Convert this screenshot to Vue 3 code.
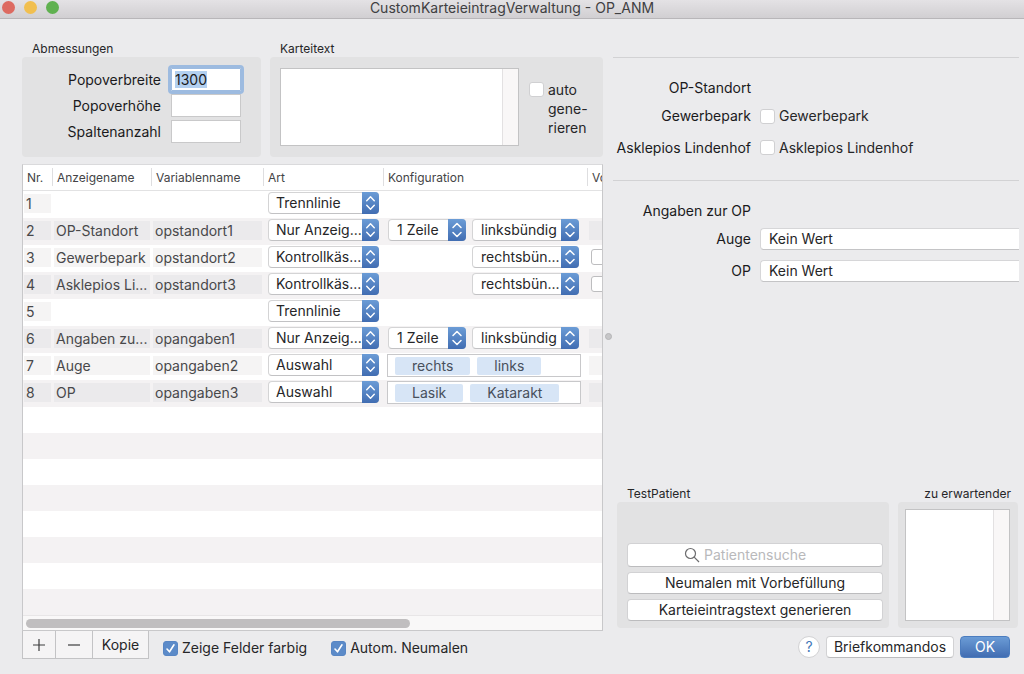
<script setup>
import { onMounted, ref } from 'vue'

const popoverWidth = ref('1300')
const popoverHeight = ref('')
const columnCount = ref('')
const widthInput = ref(null)

const rows = [
  { nr: 1, art: 'Trennlinie' },
  { nr: 2, name: 'OP-Standort', variable: 'opstandort1', art: 'Nur Anzeig...', lines: '1 Zeile', align: 'linksbündig', last: 'field' },
  { nr: 3, name: 'Gewerbepark', variable: 'opstandort2', art: 'Kontrollkäs...', align: 'rechtsbün...', last: 'check' },
  { nr: 4, name: 'Asklepios Li...', variable: 'opstandort3', art: 'Kontrollkäs...', align: 'rechtsbün...', last: 'check' },
  { nr: 5, art: 'Trennlinie' },
  { nr: 6, name: 'Angaben zu...', variable: 'opangaben1', art: 'Nur Anzeig...', lines: '1 Zeile', align: 'linksbündig', last: 'field' },
  { nr: 7, name: 'Auge', variable: 'opangaben2', art: 'Auswahl', tokens: ['rechts', 'links'], last: 'field' },
  { nr: 8, name: 'OP', variable: 'opangaben3', art: 'Auswahl', tokens: ['Lasik', 'Katarakt'], last: 'field' }
]

onMounted(() => {
  widthInput.value.focus()
  widthInput.value.select()
})
</script>

<template>
  <div class="window">
    <header class="titlebar">
      <div class="lights">
        <button class="light red" aria-label="Schließen"></button>
        <button class="light yellow" aria-label="Minimieren"></button>
        <button class="light green" aria-label="Vollbild"></button>
      </div>
      <h1>CustomKarteieintragVerwaltung - OP_ANM</h1>
    </header>

    <main class="content">
      <section class="left">
        <div class="groups">
          <section class="group dims">
            <h2>Abmessungen</h2>
            <div class="box dims-box">
              <label for="pw">Popoverbreite</label>
              <input id="pw" ref="widthInput" v-model="popoverWidth" type="text" class="num">
              <label for="ph">Popoverhöhe</label>
              <input id="ph" v-model="popoverHeight" type="text" class="num">
              <label for="cc">Spaltenanzahl</label>
              <input id="cc" v-model="columnCount" type="text" class="num">
            </div>
          </section>
          <section class="group card">
            <h2>Karteitext</h2>
            <div class="box card-box">
              <div class="area">
                <textarea aria-label="Karteitext"></textarea>
                <span class="track"></span>
              </div>
              <label class="auto">
                <input type="checkbox" class="check">
                <span>auto<br>gene-<br>rieren</span>
              </label>
            </div>
          </section>
        </div>

        <div class="table-frame">
          <table>
            <colgroup>
              <col class="c-nr"><col class="c-name"><col class="c-var"><col class="c-art"><col class="c-conf"><col>
            </colgroup>
            <thead>
              <tr>
                <th>Nr.</th><th>Anzeigename</th><th>Variablenname</th><th>Art</th><th>Konfiguration</th><th>Vo</th>
              </tr>
            </thead>
            <tbody>
              <tr v-for="row in rows" :key="row.nr">
                <td><span class="cell">{{ row.nr }}</span></td>
                <td><span v-if="row.name" class="cell">{{ row.name }}</span></td>
                <td><span v-if="row.variable" class="cell">{{ row.variable }}</span></td>
                <td class="controls">
                  <span class="popup art">
                    <select :aria-label="'Art ' + row.nr"><option>{{ row.art }}</option></select>
                    <svg viewBox="0 0 18 22" aria-hidden="true"><path d="M5 8.5 9 4.5 13 8.5M5 13.5 9 17.5 13 13.5" /></svg>
                  </span>
                </td>
                <td class="controls">
                  <div v-if="row.tokens" class="tokens">
                    <span v-for="token in row.tokens" :key="token" class="token">{{ token }}</span>
                  </div>
                  <div v-else-if="row.align" class="config">
                    <span v-if="row.lines" class="popup lines">
                      <select :aria-label="'Zeilen ' + row.nr"><option>{{ row.lines }}</option></select>
                      <svg viewBox="0 0 18 22" aria-hidden="true"><path d="M5 8.5 9 4.5 13 8.5M5 13.5 9 17.5 13 13.5" /></svg>
                    </span>
                    <span class="popup align">
                      <select :aria-label="'Ausrichtung ' + row.nr"><option>{{ row.align }}</option></select>
                      <svg viewBox="0 0 18 22" aria-hidden="true"><path d="M5 8.5 9 4.5 13 8.5M5 13.5 9 17.5 13 13.5" /></svg>
                    </span>
                  </div>
                </td>
                <td class="clip">
                  <span v-if="row.last === 'field'" class="cell"></span>
                  <input v-if="row.last === 'check'" type="checkbox" class="check outlined" :aria-label="'Vorbelegung ' + row.nr">
                </td>
              </tr>
              <tr v-for="n in 8" :key="'empty' + n" class="empty"><td colspan="6"></td></tr>
            </tbody>
          </table>
          <div class="hscroll"><div class="thumb"></div></div>
        </div>

        <div class="below">
          <div class="segments">
            <button aria-label="Hinzufügen"><svg width="14" height="14" viewBox="0 0 14 14"><path d="M1 7H13M7 1V13" /></svg></button>
            <button aria-label="Entfernen"><svg width="14" height="14" viewBox="0 0 14 14"><path d="M1 7H13" /></svg></button>
            <button>Kopie</button>
          </div>
          <label class="option"><input type="checkbox" class="check" checked>Zeige Felder farbig</label>
          <label class="option"><input type="checkbox" class="check" checked>Autom. Neumalen</label>
        </div>
      </section>

      <div class="splitter"><span></span></div>

      <section class="right">
        <div class="preview first">
          <span class="name">OP-Standort</span><span></span>
          <span class="name">Gewerbepark</span>
          <label class="value"><input type="checkbox" class="check">Gewerbepark</label>
          <span class="name">Asklepios Lindenhof</span>
          <label class="value"><input type="checkbox" class="check">Asklepios Lindenhof</label>
        </div>
        <div class="preview second">
          <span class="name">Angaben zur OP</span><span></span>
          <label class="name" for="auge">Auge</label>
          <select id="auge" class="wide"><option>Kein Wert</option></select>
          <label class="name" for="op">OP</label>
          <select id="op" class="wide"><option>Kein Wert</option></select>
        </div>

        <div class="test">
          <section class="group patient">
            <h2>TestPatient</h2>
            <div class="box patient-box">
              <label class="search">
                <svg width="16" height="16" viewBox="0 0 16 16" aria-hidden="true"><circle cx="6.5" cy="6.5" r="5" /><path d="M10.2 10.2 15 15" /></svg>
                <input type="text" placeholder="Patientensuche" aria-label="Patientensuche">
              </label>
              <button class="push">Neumalen mit Vorbefüllung</button>
              <button class="push">Karteieintragstext generieren</button>
            </div>
          </section>
          <section class="group expected">
            <h2>zu erwartender</h2>
            <div class="box expected-box">
              <div class="area">
                <textarea aria-label="zu erwartender"></textarea>
                <span class="track"></span>
              </div>
            </div>
          </section>
        </div>

        <footer class="actions">
          <button class="help">?</button>
          <button class="push brief">Briefkommandos</button>
          <button class="push ok">OK</button>
        </footer>
      </section>
    </main>
  </div>
</template>

<style>
body {
  background: #ebebed;
}
</style>

<style scoped>
* {
  box-sizing: border-box;
}

.window {
  display: flex;
  flex-direction: column;
  min-height: 100vh;
  overflow: hidden;
  background: #ebebed;
  color: #262628;
  font: 14px/18px Inter, "Liberation Sans", sans-serif;
}

button, input, select, textarea {
  margin: 0;
  padding: 0;
  border: 0;
  color: inherit;
  font: inherit;
}

h1, h2 {
  margin: 0;
  font-weight: 400;
}

.titlebar {
  display: grid;
  grid-template-columns: 1fr auto 1fr;
  height: 19px;
  background: linear-gradient(#e4e2e5, #d1cfd2);
  border-bottom: 1px solid #b8b6b9;
}

.titlebar h1 {
  font-size: 14px;
  line-height: 16px;
  color: #404042;
}

.lights {
  display: flex;
  gap: 9px;
  padding: 1px 2px;
}

.light {
  width: 13px;
  height: 13px;
  border-radius: 50%;
}

.red { background: #dd6a61; }
.yellow { background: #f1bf50; }
.green { background: #60b150; }

.content {
  display: flex;
  flex: 1;
  padding: 0 5px 0 22px;
}

.left {
  flex: 581 1 0;
  min-width: 0;
  padding-top: 21px;
}

.right {
  display: flex;
  flex: 406 1 0;
  flex-direction: column;
  min-width: 0;
  padding-top: 38px;
}

.splitter {
  display: flex;
  align-items: center;
  justify-content: center;
  width: 10px;
  padding-bottom: 20px;
}

.splitter span {
  width: 7px;
  height: 7px;
  border: 1px solid #b4b4b6;
  border-radius: 50%;
  background: #c6c6c8;
}

.groups {
  display: flex;
  gap: 9px;
}

.group {
  min-width: 0;
}

.group h2 {
  padding: 0 10px;
  font-size: 12px;
  line-height: 17px;
}

.box {
  border-radius: 4px;
  background: #e2e2e3;
}

.dims { flex: 239 1 0; }
.card { flex: 333 1 0; }

.dims-box {
  display: grid;
  grid-template-columns: 139px 70px;
  grid-auto-rows: 23px;
  gap: 3px 10px;
  height: 100px;
  padding-top: 11px;
  align-items: center;
  color: #1a1a1c;
}

.dims-box label {
  text-align: right;
}

.num {
  width: 100%;
  height: 23px;
  padding: 0 3px;
  border: 1px solid #c9c9ca;
  background: #fff;
}

.num:focus {
  z-index: 1;
  outline: 3px solid #9dbbe0;
  outline-offset: 0;
  border-color: #9dbbe0;
  border-radius: 1px;
}

.num::selection {
  background: #b3d0f0;
  color: #1a1a1c;
}

.card-box {
  display: flex;
  gap: 10px;
  height: 100px;
  padding: 11px 10px;
}

.area {
  display: flex;
  flex: 1;
  min-width: 0;
  border: 1px solid #c3c3c4;
  background: #fff;
}

.area textarea {
  flex: 1;
  min-width: 0;
  resize: none;
  outline: 0;
}

.track {
  flex: none;
  width: 16px;
  border-left: 1px solid #e3e1e2;
  background: #f9f7f7;
}

.auto {
  display: flex;
  gap: 4px;
  width: 64px;
  padding-top: 14px;
  line-height: 19px;
}

.auto span {
  margin-top: -2px;
}

.check {
  flex: none;
  display: block;
  width: 15px;
  height: 15px;
  appearance: none;
  border: 1px solid #d0d0d2;
  border-radius: 3px;
  background: #fff;
}

.check:checked {
  border-color: #5886c4;
  background: #5c8bc9 url("data:image/svg+xml,%3Csvg xmlns='http://www.w3.org/2000/svg' viewBox='0 0 13 13'%3E%3Cpath d='M3 7 5.5 9.8 10 2.8' fill='none' stroke='white' stroke-width='1.6' stroke-linecap='round' stroke-linejoin='round'/%3E%3C/svg%3E") center / 13px 13px no-repeat;
}

.outlined {
  height: 16px;
  margin: 4px 0 0 2px;
  border-color: #bdbdbf;
}

.table-frame {
  margin-top: 7px;
  border: 1px solid #c8c8ca;
  border-top-color: #dadadc;
  overflow: hidden;
  background: #fff;
}

table {
  width: 100%;
  table-layout: fixed;
  border-collapse: separate;
  border-spacing: 0;
}

.c-nr { width: 30px; }
.c-name { width: 99px; }
.c-var { width: 112px; }
.c-art { width: 120px; }
.c-conf { width: 204px; }

th {
  height: 26px;
  padding: 0 0 0 4px;
  border-bottom: 1px solid #e2e2e3;
  background: linear-gradient(#dedee0, #dedee0) right 3px / 1px 18px no-repeat;
  text-align: left;
  font-size: 12px;
  font-weight: 400;
  line-height: 18px;
  white-space: nowrap;
  overflow: hidden;
  color: #444446;
}

th:last-child {
  background: none;
}

td {
  height: 27px;
  padding: 0 2px 0 1px;
  vertical-align: top;
  white-space: nowrap;
}

tr:nth-child(even) td {
  background: #f4f2f3;
}

tr.empty td {
  height: 26px;
}

.cell {
  display: block;
  height: 19px;
  margin-top: 3px;
  padding-left: 2px;
  overflow: hidden;
  background: #f5f4f4;
  line-height: 20px;
  color: #48484a;
}

tr:nth-child(even) .cell {
  background: #ebeaec;
}

.clip {
  padding-right: 0;
  overflow: hidden;
}

.controls {
  padding: 1px 0 0 4px;
}

.popup {
  position: relative;
  display: block;
  height: 22px;
}

.popup select {
  width: 100%;
  height: 22px;
  padding: 0 17px 0 8px;
  appearance: none;
  border: 1px solid #d4d4d5;
  border-bottom-color: #c2c2c4;
  border-radius: 4px;
  background: #fff;
  line-height: 20px;
}

.popup svg {
  position: absolute;
  top: 0;
  right: 0;
  width: 18px;
  height: 22px;
  border-radius: 0 4px 4px 0;
  background: linear-gradient(#6b9cd6, #416db2);
  fill: none;
  stroke: #fff;
  stroke-width: 1.5;
  stroke-linecap: round;
  stroke-linejoin: round;
  pointer-events: none;
}

.popup.art select {
  padding: 0 16px 0 7px;
}

.popup.art svg {
  width: 17px;
}

.art { width: 111px; }
.lines { width: 78px; }
.align { width: 107px; margin-left: auto; }

.config {
  display: flex;
  width: 191px;
}

.tokens {
  display: flex;
  align-items: center;
  gap: 7px;
  width: 194px;
  height: 23px;
  padding: 0 7px;
  margin-left: -1px;
  border: 1px solid #c8c8ca;
  background: #fff;
}

.token {
  height: 18px;
  padding: 0 17px;
  border-radius: 2px;
  background: #d7e5f6;
  color: #48505c;
}

.hscroll {
  height: 15px;
  padding: 3px 3px;
  border-top: 1px solid #e8e6e7;
  background: #f9f8f8;
}

.thumb {
  width: 67%;
  height: 9px;
  border-radius: 5px;
  background: #c0bebf;
}

.below {
  display: flex;
  align-items: flex-start;
}

.segments {
  display: flex;
  margin-right: 14px;
  border: 1px solid #c3c3c5;
  border-top: 0;
  background: #f5f4f5;
}

.segments button {
  display: flex;
  align-items: center;
  justify-content: center;
  width: 37px;
  height: 27px;
  border-right: 1px solid #c3c3c5;
  background: none;
}

.segments button:first-child {
  width: 33px;
}

.segments button:last-child {
  width: 55px;
  border-right: 0;
}

.segments svg {
  fill: none;
  stroke: #3c3c3e;
  stroke-width: 1.2;
}

.option {
  display: flex;
  align-items: center;
  gap: 4px;
  margin: 8px 24px 0 0;
}

.preview {
  display: grid;
  grid-template-columns: 138px 1fr;
  grid-template-rows: 28px 28px 35px;
  column-gap: 9px;
  align-items: center;
  border-top: 1px solid #d2d2d4;
}

.first {
  height: 123px;
  padding: 16px 0;
}

.second {
  padding-top: 16px;
}

.name {
  text-align: right;
  white-space: nowrap;
  color: #1a1a1c;
}

.value {
  display: flex;
  align-items: center;
  gap: 4px;
}

.wide {
  width: 100%;
  height: 22px;
  padding: 0 8px;
  appearance: none;
  border: 1px solid #d6d6d8;
  border-bottom-color: #c4c4c6;
  border-right: 0;
  border-radius: 4px 0 0 4px;
  background: #fff;
}

.test {
  display: flex;
  gap: 9px;
  margin-top: auto;
  padding: 0 1px 0 4px;
}

.patient { flex: 272 1 0; }
.expected { flex: 120 1 0; }

.expected h2 {
  padding: 0 7px;
  text-align: right;
}

.patient-box {
  display: flex;
  flex-direction: column;
  gap: 5px;
  height: 126px;
  padding: 41px 6px 0 10px;
}

.expected-box {
  display: flex;
  height: 126px;
  padding: 7px 8px 7px 7px;
}

.push, .search {
  height: 22px;
  border: 1px solid #d2d2d4;
  border-bottom-color: #bcbcbe;
  border-radius: 4px;
  background: #fff;
  white-space: nowrap;
}

.search {
  display: flex;
  align-items: center;
  justify-content: center;
  gap: 4px;
  height: 24px;
}

.search svg {
  flex: none;
  fill: none;
  stroke: #6c6c6e;
  stroke-width: 1.2;
}

.search input {
  width: 122px;
  min-width: 0;
  background: none;
  outline: 0;
}

.search input::placeholder {
  color: #b9b9bb;
  opacity: 1;
}

.actions {
  display: flex;
  align-items: center;
  justify-content: flex-end;
  gap: 6px;
  padding: 8px 9px 16px;
}

.help {
  width: 22px;
  height: 22px;
  border: 1px solid #d2d2d4;
  border-radius: 50%;
  background: #fff;
  color: #3f78b8;
}

.brief {
  width: 128px;
}

.push.ok {
  width: 50px;
  border-color: #4c7dbf;
  background: linear-gradient(#6b9cd6, #416db2);
  color: #fff;
}
</style>
